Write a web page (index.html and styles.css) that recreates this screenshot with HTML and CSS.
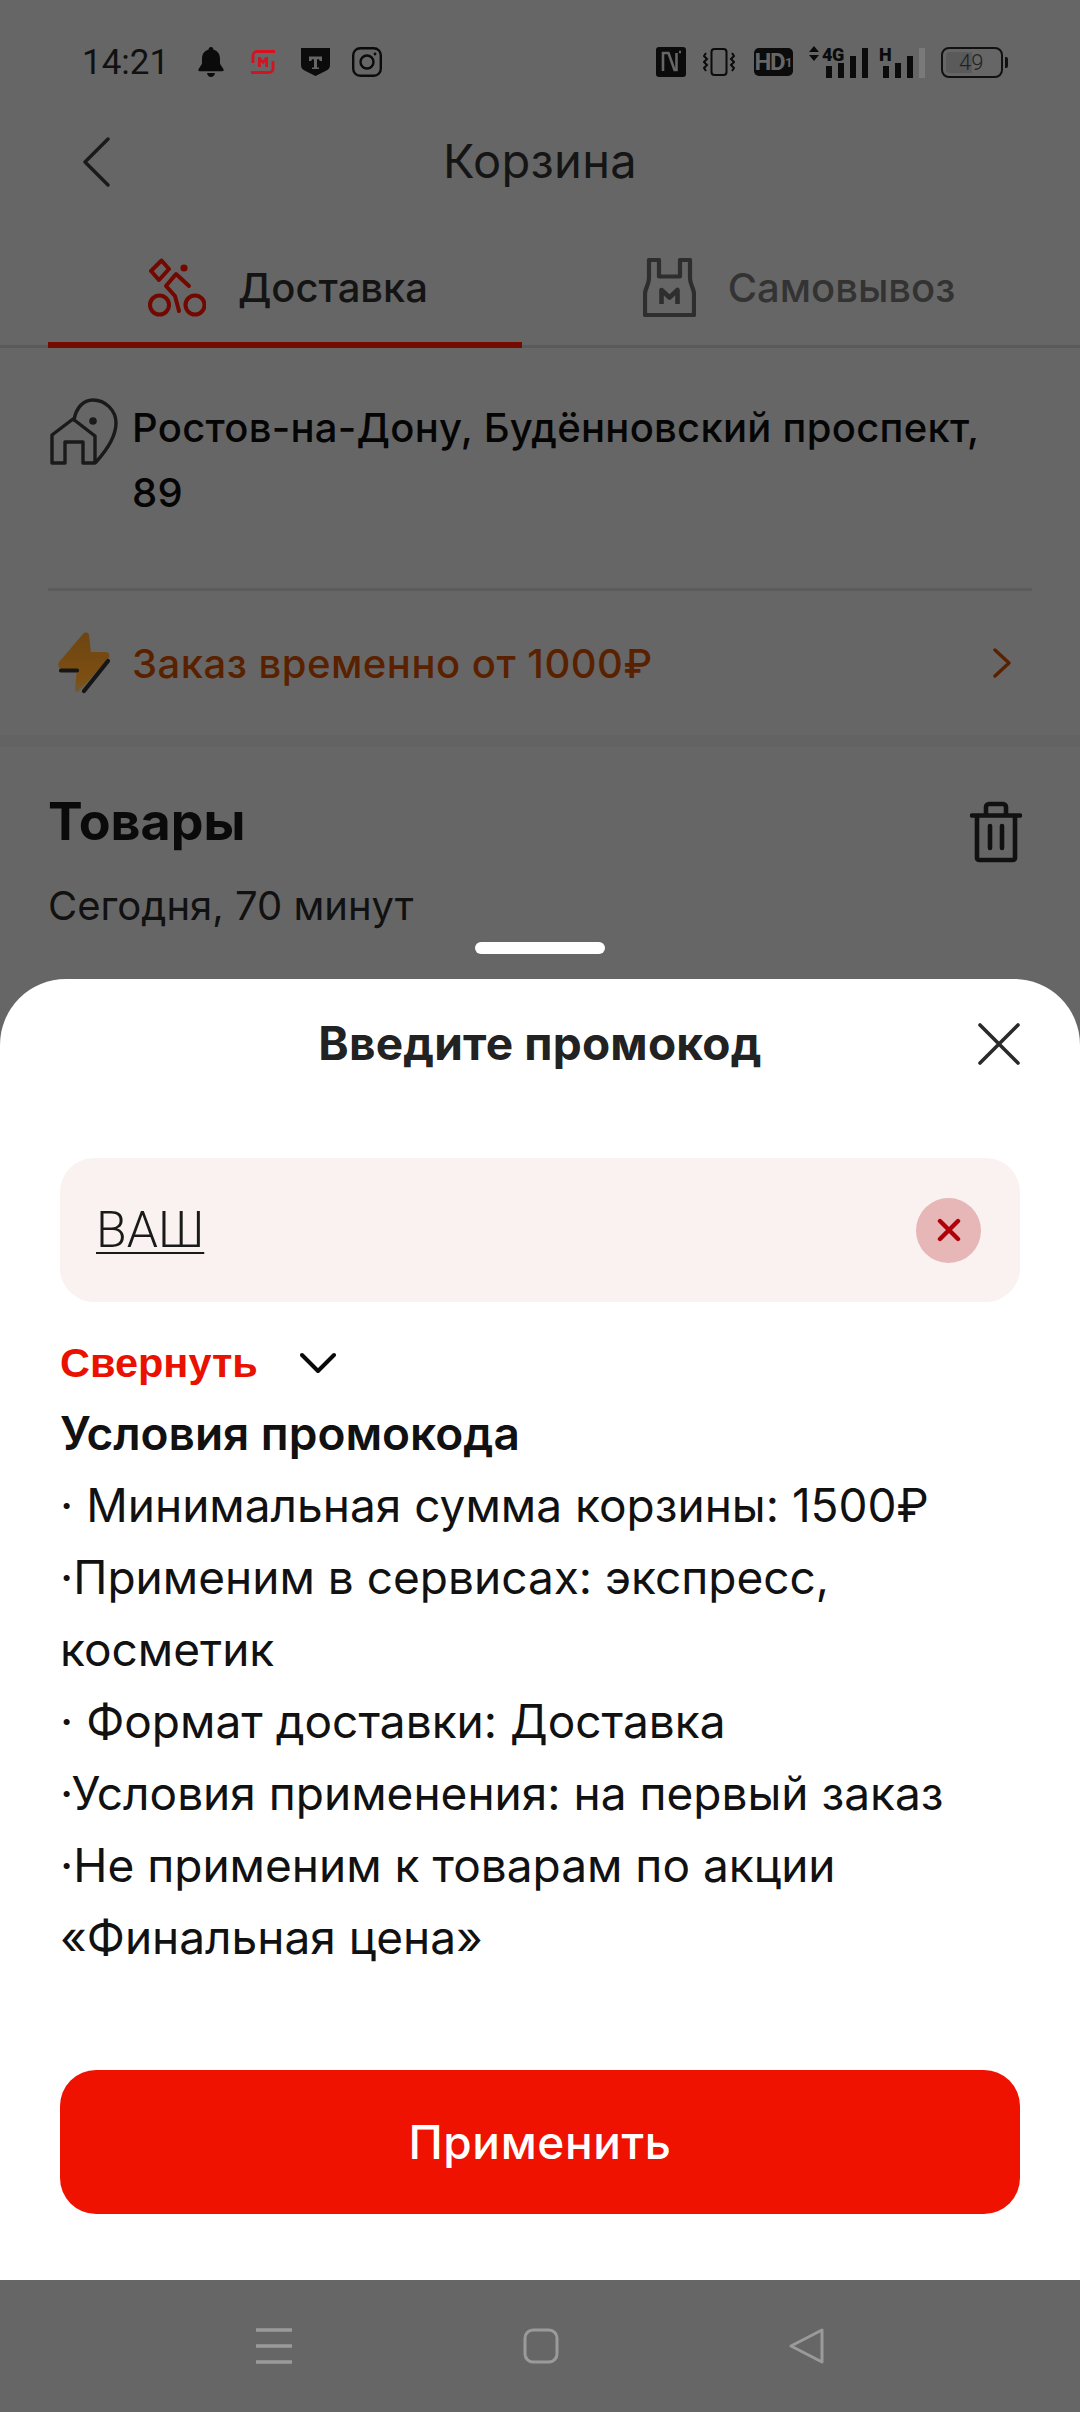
FILE: index.html
```html
<!DOCTYPE html>
<html lang="ru">
<head>
    <meta charset="UTF-8">
    <meta name="viewport" content="width=device-width, initial-scale=1.0">
    <title>Корзина</title>
    <link rel="stylesheet" href="styles.css">
</head>
<body>

<div class="screen">
    <div class="page">
        <div class="status-bar">
            <span class="clock">14:21</span>
            <svg class="st-bell" width="26" height="30" viewBox="0 0 26 30"><path fill="#0b0b0b" d="M13 0c1.600 0 2.500 1.200 2.500 2.800 4.500 1.200 6.500 4.700 6.500 9v5l3.500 5.400c.5 1 0 2-1.200 2H1.700c-1.200 0-1.700-1-1.200-2L4 16.800v-5c0-4.300 2-7.800 6.500-9C10.500 1.200 11.400 0 13 0zM9 26h8c-.4 2.400-2 4-4 4s-3.600-1.600-4-4z"/></svg>
            <svg class="st-mag" width="24" height="24" viewBox="0 0 24 24" fill="none" stroke="#d8111f" stroke-width="2.800"><path d="M24 1.500H6a4 4 0 0 0-4 4V13"/><path d="M0 22.500h18a4 4 0 0 0 4-4V11"/><path fill="#d8111f" stroke="none" d="M7 7h2.500L12 10.500 14.500 7H17v10h-2.800v-5.500L12 14.500l-2.200-3V17H7z"/></svg>
            <svg class="st-shield" width="29" height="28" viewBox="0 0 29 28"><path fill="#0b0b0b" d="M0 0h29v17c0 3-1.500 4.500-4 5.800L14.500 28 4 22.800C1.500 21.500 0 20 0 17z"/><path fill="#666" d="M8 8.500h13v4.500h-2.200l-.8-1.700h-2v8.200h2v1.500h-7v-1.500h2v-8.200h-2l-.8 1.700H8z"/></svg>
            <svg class="st-insta" width="30" height="30" viewBox="0 0 30 30" fill="none" stroke="#0b0b0b" stroke-width="2.400"><rect x="1.200" y="1.200" width="27.600" height="27.600" rx="7"/><circle cx="15" cy="15" r="6.500"/><circle cx="23" cy="7" r="1.400" fill="#0b0b0b" stroke="none"/></svg>
            <div class="st-right">
                <svg class="st-nfc" width="30" height="30" viewBox="0 0 30 30"><rect width="30" height="30" rx="3" fill="#0b0b0b"/><path fill="none" stroke="#666" stroke-width="2.600" d="M7 24V6h5.500l6 17h2V6M23 5h2"/></svg>
                <svg class="st-vib" width="32" height="28" viewBox="0 0 32 28" fill="none" stroke="#0b0b0b" stroke-width="2"><rect x="8.500" y="1" width="15" height="26" rx="3"/><path d="M3 5L1 8l3 3-3 3 3 3-3 3 2 3M29 5l2 3-3 3 3 3-3 3 3 3-2 3"/></svg>
                <span class="hd-badge">HD<small>1</small></span>
                <div class="signal sig-4g">
                    <svg class="sig-arrows" width="10" height="15" viewBox="0 0 10 15"><path fill="#0b0b0b" d="M5 0l5 6H0zM0 9h10l-5 6z"/></svg>
                    <span class="sig-tag">4G</span>
                    <i class="b1"></i><i class="b2"></i><i class="b3"></i><i class="b4"></i>
                </div>
                <div class="signal sig-h">
                    <span class="sig-tag">H</span>
                    <i class="b1"></i><i class="b2"></i><i class="b3"></i><i class="b4 off"></i>
                </div>
                <div class="battery"><div class="battery-fill"></div><span class="battery-num">49</span></div>
            </div>
        </div>

        <div class="head">
            <svg class="back" width="28" height="50" viewBox="0 0 28 50" fill="none" stroke="#1a1a1a" stroke-width="3.400" stroke-linecap="round" stroke-linejoin="round"><path d="M26 2L3 25l23 23"/></svg>
            <span class="head-title">Корзина</span>
        </div>

        <div class="tabs">
            <div class="tab active">
                <svg width="58" height="59" viewBox="0 0 58 59" fill="none" stroke="#720800" stroke-width="4" stroke-linecap="round" stroke-linejoin="round"><path d="M13.500 2.500L21 11 11 22 3 13z"/><circle cx="36" cy="10" r="3.600" fill="#720800" stroke="none"/><path d="M41 28L28 16 18 28l9 10 4 15"/><circle cx="11.500" cy="47" r="9.500"/><circle cx="47" cy="47" r="9.500"/></svg>
                <span>Доставка</span>
            </div>
            <div class="tab">
                <svg width="53" height="59" viewBox="0 0 53 59" fill="none" stroke="#2e2e2e" stroke-width="4.200" stroke-linejoin="round"><path d="M6 2h10v16.500h21V2h10v18c0 7 4 10 4 16v21H2V36c0-6 4-9 4-16z"/><path stroke-width="4.600" d="M18.500 46V32l8 7.500 8-7.500v14"/></svg>
                <span>Самовывоз</span>
            </div>
        </div>

        <div class="address">
            <svg class="address-icon" width="68" height="68" viewBox="0 0 68 68" fill="none" stroke="#1a1a1a" stroke-width="3.400" stroke-linejoin="round" stroke-linecap="round"><path d="M24 22C26 10 33 2 43 2c12 0 23 10 23 23 0 13-10 28-20 39"/><circle cx="43" cy="23" r="3.800" fill="#1a1a1a" stroke="none"/><path d="M2 65V37l21-16 22 17v27H33V44H15v21z"/></svg>
            <div class="address-text">Ростов-на-Дону, Будённовский проспект,<br>89</div>
        </div>
        <div class="rule"></div>
        <div class="notice">
            <svg class="bolt" width="54" height="62" viewBox="0 0 54 62">
                <defs>
                    <linearGradient id="boltFill" x1="0" y1="0" x2="0" y2="1">
                        <stop offset="0" stop-color="#6d4512"/>
                        <stop offset="0.8" stop-color="#7d4f12"/>
                        <stop offset="1" stop-color="#6f5a40"/>
                    </linearGradient>
                </defs>
                <path fill="url(#boltFill)" d="M31 3C30 0 27 0 25 2L1 30c-2 4 0 7 3 7h15l-2 20c0 4 3 4 5 1l28-31c3-4 1-7-3-7H33z"/>
                <path d="M3 38.500h16M26 59l24-30" fill="none" stroke="#161616" stroke-width="4.200" stroke-linecap="round"/>
            </svg>
            <span class="notice-text">Заказ временно от 1000₽</span>
            <svg class="notice-arrow" width="18" height="30" viewBox="0 0 18 30" fill="none" stroke="#5a2100" stroke-width="3.400" stroke-linecap="round" stroke-linejoin="round"><path d="M2 2l14 13L2 28"/></svg>
        </div>
        <div class="band"></div>
        <div class="goods">
            <div class="goods-left">
                <div class="goods-title">Товары</div>
                <div class="goods-time">Сегодня, 70 минут</div>
            </div>
            <svg class="trash" width="52" height="62" viewBox="0 0 52 62" fill="none" stroke="#111" stroke-width="4.600" stroke-linecap="round" stroke-linejoin="round"><path d="M2 14.500h48M16 14.500V6a3 3 0 0 1 3-3h14a3 3 0 0 1 3 3v8.500M7 14.500V57a2 2 0 0 0 2 2h34a2 2 0 0 0 2-2V14.500M20 25v22M32 25v22"/></svg>
        </div>
        <div class="grabber"></div>
    </div>

    <div class="sheet">
        <div class="sheet-head">
            <span class="sheet-title">Введите промокод</span>
            <svg class="sheet-close" width="42" height="42" viewBox="0 0 42 42" fill="none" stroke="#2a2a2a" stroke-width="3.600" stroke-linecap="round"><path d="M2 2l38 38M40 2L2 40"/></svg>
        </div>
        <div class="promo-input">
            <span class="promo-value">ВАШ</span>
            <span class="promo-clear">
                <svg width="24" height="24" viewBox="0 0 24 24" fill="none" stroke="#b0000a" stroke-width="4.400" stroke-linecap="round"><path d="M3 3l18 18M21 3L3 21"/></svg>
            </span>
        </div>
        <div class="collapse">
            <span class="collapse-text">Свернуть</span>
            <svg width="36" height="22" viewBox="0 0 36 22" fill="none" stroke="#0a0a0a" stroke-width="4" stroke-linecap="round" stroke-linejoin="round"><path d="M2 3l16 16L34 3"/></svg>
        </div>
        <div class="terms">
            <div class="terms-title">Условия промокода</div>
            <div>· Минимальная сумма корзины: 1500₽</div>
            <div>·Применим в сервисах: экспресс,<br>косметик</div>
            <div>· Формат доставки: Доставка</div>
            <div>·Условия применения: на первый заказ</div>
            <div>·Не применим к товарам по акции<br>«Финальная цена»</div>
        </div>
        <button class="apply">Применить</button>
    </div>

    <div class="nav-bar">
        <svg width="36" height="36" viewBox="0 0 36 36" fill="none" stroke="#9a9a9a" stroke-width="3.400"><path d="M0 2h36M0 18h36M0 34h36"/></svg>
        <svg width="36" height="36" viewBox="0 0 36 36" fill="none" stroke="#9a9a9a" stroke-width="3"><rect x="2" y="2" width="32" height="32" rx="8"/></svg>
        <svg width="36" height="36" viewBox="0 0 36 36" fill="none" stroke="#9a9a9a" stroke-width="3" stroke-linejoin="round"><path d="M33 2v32L2 18z"/></svg>
    </div>
</div>

</body>
</html>
```

FILE: styles.css
```css
* {
    margin: 0;
    padding: 0;
    box-sizing: border-box;
}

html, body {
    width: 1080px;
    height: 2412px;
    overflow: hidden;
}

body {
    font-family: 'Inter', 'Roboto', sans-serif;
    background-color: #666666;
    color: #0b0b0b;
}

.screen {
    width: 1080px;
    height: 2412px;
    display: flex;
    flex-direction: column;
}

.page {
    height: 979px;
    flex-shrink: 0;
    display: flex;
    flex-direction: column;
}

/* status bar */
.status-bar {
    height: 126px;
    padding: 0 77px 2px 82px;
    display: flex;
    align-items: center;
}

.clock {
    font-family: 'Roboto', sans-serif;
    font-size: 35px;
    color: #111111;
    width: 116px;
}

.st-bell, .st-mag, .st-shield, .st-insta {
    flex-shrink: 0;
}

.st-mag {
    margin-left: 27px;
}

.st-shield {
    margin-left: 26px;
}

.st-insta {
    margin-left: 22px;
}

.st-right {
    margin-left: auto;
    display: flex;
    align-items: center;
}

.st-vib {
    margin-left: 17px;
}

.hd-badge {
    margin-left: 19px;
    width: 39px;
    height: 28px;
    background-color: #0b0b0b;
    color: #666666;
    border-radius: 5px;
    font-family: 'Roboto', sans-serif;
    font-size: 24px;
    font-weight: 700;
    letter-spacing: -1.5px;
    display: flex;
    align-items: center;
    justify-content: center;
}

.hd-badge small {
    font-size: 13px;
    letter-spacing: 0;
    margin-left: 1px;
}

.signal {
    position: relative;
    height: 32px;
    display: flex;
    align-items: flex-end;
    gap: 6px;
}

.sig-4g {
    width: 58px;
    margin-left: 16px;
    padding-left: 17px;
}

.sig-h {
    width: 46px;
    margin-left: 12px;
    padding-left: 4px;
}

.signal i {
    display: block;
    width: 6px;
    flex-shrink: 0;
    background-color: #0b0b0b;
}

.signal .b1 { height: 12px; }
.signal .b2 { height: 15px; }
.signal .b3 { height: 22px; }
.signal .b4 { height: 30px; }
.signal .off { background-color: #7a7a7a; }

.sig-arrows {
    position: absolute;
    left: 0;
    top: 0;
}

.sig-tag {
    position: absolute;
    top: 0;
    font-family: 'Roboto', sans-serif;
    font-size: 18px;
    font-weight: 900;
    line-height: 18px;
    letter-spacing: -0.5px;
    color: #0b0b0b;
}

.sig-4g .sig-tag { left: 13px; }
.sig-h .sig-tag { left: 0; }

.battery {
    position: relative;
    width: 62px;
    height: 31px;
    border: 2px solid #111;
    border-radius: 8px;
    margin-left: 16px;
}

.battery::after {
    content: "";
    position: absolute;
    right: -7px;
    top: 8px;
    width: 3px;
    height: 11px;
    background-color: #111;
    border-radius: 0 2px 2px 0;
}

.battery-fill {
    position: absolute;
    left: 3px;
    top: 3px;
    bottom: 3px;
    width: 26px;
    background-color: #5a5a5a;
    border-radius: 3px 0 0 3px;
}

.battery-num {
    position: absolute;
    left: 16px;
    top: 1px;
    font-family: 'Roboto', sans-serif;
    font-size: 22px;
    font-weight: 300;
    line-height: 25px;
    color: #222;
}

/* header */
.head {
    position: relative;
    height: 72px;
    padding-bottom: 4px;
    display: flex;
    align-items: center;
    justify-content: center;
}

.back {
    position: absolute;
    left: 82px;
    top: 11px;
}

.head-title {
    font-size: 47px;
    letter-spacing: 0.3px;
    color: #151515;
}

/* tabs */
.tabs {
    height: 150px;
    padding: 0 48px;
    display: flex;
    border-bottom: 3px solid #5a5a5a;
}

.tab {
    flex: 1;
    display: flex;
    align-items: center;
    justify-content: center;
    gap: 32px;
    font-size: 40px;
    font-weight: 500;
    color: #333333;
    margin-bottom: -3px;
    padding-top: 34px;
    border-bottom: 6px solid transparent;
}

.tab.active {
    flex: 0 0 474px;
    padding-left: 6px;
    color: #141414;
    border-bottom-color: #740a00;
}

.tab:last-child {
    padding-left: 44px;
}

/* address */
.address {
    padding: 49px 48px 0;
    height: 240px;
    display: flex;
    align-items: flex-start;
    flex-shrink: 0;
    gap: 14px;
}

.address-icon {
    flex-shrink: 0;
    margin-left: 2px;
    margin-top: 1px;
}

.address-text {
    font-size: 40px;
    font-weight: 500;
    letter-spacing: 0.28px;
    line-height: 65px;
    color: #050505;
    margin-top: -2px;
}

.rule {
    height: 3px;
    margin: 0 48px;
    background-color: #5c5c5c;
}

.notice {
    height: 144px;
    padding: 0 48px 0 58px;
    display: flex;
    align-items: center;
    gap: 20px;
    flex-shrink: 0;
}

.notice-text {
    flex: 1;
    font-size: 40px;
    font-weight: 500;
    letter-spacing: 0.5px;
    color: #5a2100;
}

.notice-arrow {
    margin-right: 21px;
}

.band {
    height: 12px;
    background-color: #636363;
    flex-shrink: 0;
}

.goods {
    padding: 46px 58px 0 48px;
    display: flex;
    justify-content: space-between;
    flex-shrink: 0;
}

.goods-title {
    font-size: 52px;
    font-weight: 700;
    line-height: 58px;
    color: #0a0a0a;
}

.goods-time {
    font-size: 40px;
    line-height: 46px;
    margin-top: 32px;
    color: #111;
}

.trash {
    margin-top: 8px;
}

.grabber {
    width: 130px;
    height: 12px;
    margin: 13px auto 0;
    background-color: #ffffff;
    border-radius: 6px;
}

/* bottom sheet */
.sheet {
    flex: 1;
    background-color: #ffffff;
    border-radius: 66px 66px 0 0;
    padding: 0 60px;
    display: flex;
    flex-direction: column;
}

.sheet-head {
    position: relative;
    height: 179px;
    padding-bottom: 52px;
    display: flex;
    align-items: center;
    justify-content: center;
}

.sheet-title {
    font-family: 'Inter', 'Roboto', sans-serif;
    font-size: 46px;
    font-weight: 700;
    letter-spacing: 0.2px;
    color: #222222;
}

.sheet-close {
    position: absolute;
    right: 0;
    top: 44px;
}

.promo-input {
    height: 144px;
    padding: 0 39px 0 36px;
    background-color: #faf2f0;
    border-radius: 34px;
    display: flex;
    align-items: center;
    justify-content: space-between;
}

.promo-value {
    font-family: 'Roboto', 'Liberation Sans', sans-serif;
    font-size: 50px;
    font-weight: 300;
    color: #1a1a1a;
    text-decoration: underline;
    text-decoration-thickness: 2px;
    text-underline-offset: 5px;
}

.promo-clear {
    width: 65px;
    height: 65px;
    border-radius: 50%;
    background-color: #e7b6b7;
    display: flex;
    align-items: center;
    justify-content: center;
}

.collapse {
    height: 60px;
    margin-top: 31px;
    display: flex;
    align-items: center;
    gap: 42px;
}

.collapse-text {
    font-family: 'Liberation Sans', sans-serif;
    font-size: 41.5px;
    font-weight: 700;
    color: #ea1100;
}

.terms {
    font-size: 46px;
    line-height: 72px;
    color: #111111;
    margin-top: 4px;
}

.terms-title {
    font-weight: 600;
}

.apply {
    height: 144px;
    margin-top: 97px;
    border: none;
    border-radius: 36px;
    background-color: #f01200;
    color: #ffffff;
    font-family: 'Inter', 'Roboto', sans-serif;
    font-size: 46px;
    font-weight: 500;
    letter-spacing: 0.6px;
    flex-shrink: 0;
}

/* system nav */
.nav-bar {
    height: 132px;
    background-color: #666666;
    padding: 0 255px 0 256px;
    display: flex;
    align-items: center;
    justify-content: space-between;
    flex-shrink: 0;
}
```
